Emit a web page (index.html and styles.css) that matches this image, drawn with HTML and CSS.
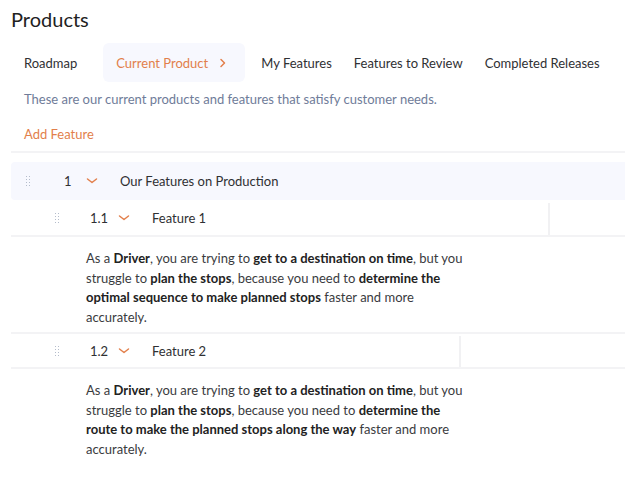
FILE: index.html
```html
<!DOCTYPE html>
<html lang="en">
<head>
    <meta charset="UTF-8">
    <meta name="viewport" content="width=device-width, initial-scale=1.0">
    <title>Products</title>
    <link rel="stylesheet" href="styles.css">
</head>
<body>
    <div class="page">
        <h1 class="title">Products</h1>

        <!-- Tabs -->
        <div class="tabs">
            <div class="tab">Roadmap</div>
            <div class="tab active">Current Product
                <svg class="tab-arrow" width="8" height="10" viewBox="0 0 8 10"><path d="M2 1.5 L5.5 5 L2 8.5" fill="none" stroke="#e27f4b" stroke-width="1.5" stroke-linecap="round" stroke-linejoin="round"/></svg>
            </div>
            <div class="tab">My Features</div>
            <div class="tab">Features to Review</div>
            <div class="tab">Completed Releases</div>
        </div>

        <p class="intro">These are our current products and features that satisfy customer needs.</p>
        <div class="add-link">Add Feature</div>

        <div class="list">
            <!-- Group -->
            <div class="row group-row">
                <span class="handle"></span>
                <span class="num">1</span>
                <svg class="chev" width="12" height="8" viewBox="0 0 12 8"><path d="M1.5 2 L6 5.5 L10.5 2" fill="none" stroke="#e27f4b" stroke-width="1.5" stroke-linecap="round" stroke-linejoin="round"/></svg>
                <span class="name">Our Features on Production</span>
            </div>

            <!-- Feature 1 -->
            <div class="row feature-row first">
                <div class="feature-main">
                    <span class="handle"></span>
                    <span class="num">1.1</span>
                    <svg class="chev" width="12" height="8" viewBox="0 0 12 8"><path d="M1.5 2 L6 5.5 L10.5 2" fill="none" stroke="#e27f4b" stroke-width="1.5" stroke-linecap="round" stroke-linejoin="round"/></svg>
                    <span class="name">Feature 1</span>
                </div>
                <div class="feature-side side-wide"></div>
            </div>
            <div class="story">
                <p class="story-text">As a <b>Driver</b>, you are trying to <b>get to a destination on time</b>, but you
                struggle to <b>plan the stops</b>, because you need to <b>determine the
                optimal sequence to make planned stops</b> faster and more
                accurately.</p>
            </div>

            <!-- Feature 2 -->
            <div class="row feature-row">
                <div class="feature-main">
                    <span class="handle"></span>
                    <span class="num">1.2</span>
                    <svg class="chev" width="12" height="8" viewBox="0 0 12 8"><path d="M1.5 2 L6 5.5 L10.5 2" fill="none" stroke="#e27f4b" stroke-width="1.5" stroke-linecap="round" stroke-linejoin="round"/></svg>
                    <span class="name">Feature 2</span>
                </div>
                <div class="feature-side side-narrow"></div>
            </div>
            <div class="story last">
                <p class="story-text">As a <b>Driver</b>, you are trying to <b>get to a destination on time</b>, but you
                struggle to <b>plan the stops</b>, because you need to <b>determine the
                route to make the planned stops along the way</b> faster and more
                accurately.</p>
            </div>
        </div>
    </div>
</body>
</html>
```

FILE: styles.css
```css
body {
    margin: 0;
    font-family: Lato, "Liberation Sans", Arial, sans-serif;
    color: #2f3033;
    background: #fff;
}

.page {
    padding: 7px 0 0 11px;
}

.title {
    margin: 0;
    font-size: 20px;
    line-height: 24px;
    font-weight: normal;
    color: #222;
}

.tabs {
    display: flex;
    align-items: center;
    margin-top: 12px;
    height: 39px;
    font-size: 13px;
}

.tab {
    padding: 0 11px;
    white-space: nowrap;
    color: #2f3033;
}

.tab:first-child {
    padding-left: 13px;
    padding-right: 12px;
}

.tab.active {
    display: flex;
    align-items: center;
    height: 39px;
    margin: 0 5px 0 14px;
    padding: 0 18px 0 13px;
    background: #f7f8fe;
    border-radius: 6px;
    color: #e27f4b;
}

.tab-arrow {
    margin-left: 11px;
}

.intro {
    margin: 9px 0 0 13px;
    font-size: 13px;
    line-height: 16px;
    color: #6f7c99;
}

.add-link {
    margin: 19px 0 0 13px;
    font-size: 13px;
    line-height: 16px;
    color: #e27f4b;
}

.list {
    margin-top: 9px;
    border-top: 2px solid #f3f3f5;
    padding-top: 9px;
}

.row {
    display: flex;
    align-items: center;
    font-size: 13px;
}

.handle {
    width: 5px;
    height: 12px;
    background-image: radial-gradient(circle, #b4bccb 0.8px, transparent 1px);
    background-size: 3px 3px;
    flex-shrink: 0;
}

.chev {
    flex-shrink: 0;
}

.num {
    flex-shrink: 0;
}

.group-row {
    height: 38px;
    background: #f7f8fe;
    border-radius: 4px 0 0 4px;
    padding-left: 14px;
}

.group-row .num {
    width: 22px;
    margin-left: 34px;
}

.group-row .name {
    margin-left: 22px;
}

.feature-row {
    height: 33px;
    border-bottom: 2px solid #f3f3f5;
}

.feature-row.first {
    height: 34px;
    margin-top: 1px;
}

.feature-main {
    display: flex;
    align-items: center;
    padding-left: 43px;
    height: 100%;
}

.feature-row .num {
    margin-left: 31px;
    width: 28px;
}

.feature-row .name {
    margin-left: 22px;
}

.feature-side {
    align-self: stretch;
    margin-top: 2px;
    border-left: 2px solid #f1f1f3;
}

.side-wide {
    margin-left: auto;
    width: 75px;
}

.side-narrow {
    margin-left: auto;
    width: 164px;
}

.story {
    padding: 12px 0 5px 75px;
    border-bottom: 2px solid #f3f3f5;
}

.story.last {
    border-bottom: none;
}

.story-text {
    margin: 0;
    max-width: 385px;
    font-size: 13px;
    line-height: 19.5px;
    color: #3a3b3e;
}

.story-text b {
    color: #222;
}
```
